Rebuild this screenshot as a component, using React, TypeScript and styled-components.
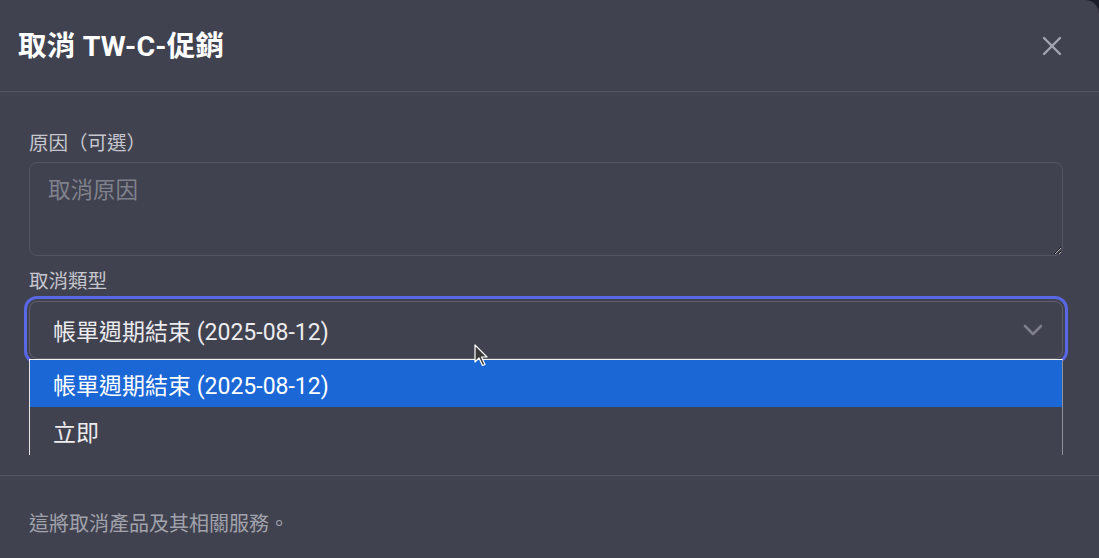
import React, {useState} from 'react';
import styled, {createGlobalStyle} from "styled-components";

const options = [
    '帳單週期結束 (2025-08-12)',
    '立即',
]

const App: React.FC = () => {
    const [selected, setSelected] = useState(0)

    return (
        <>
            <GlobalStyle/>
            <Modal>
                <Header>
                    <Title>取消 TW-C-促銷</Title>
                    <CloseButton aria-label="close">
                        <svg width="20" height="20" viewBox="0 0 20 20">
                            <path d="M2 2 L18 18 M18 2 L2 18" stroke="currentColor" strokeWidth="2.4"
                                  strokeLinecap="round"/>
                        </svg>
                    </CloseButton>
                </Header>
                <Body>
                    <Field>
                        <Label>原因（可選）</Label>
                        <TextArea placeholder="取消原因"/>
                    </Field>
                    <Field>
                        <Label>取消類型</Label>
                        <SelectWrap>
                            <SelectBox>
                                <span>{options[selected]}</span>
                                <svg width="20" height="12" viewBox="0 0 20 12">
                                    <path d="M2 2 L10 10 L18 2" fill="none" stroke="currentColor" strokeWidth="2.6"
                                          strokeLinecap="round" strokeLinejoin="round"/>
                                </svg>
                            </SelectBox>
                            <Dropdown>
                                {options.map((o, i) => (
                                    <Option key={o} $active={i === selected} onClick={() => setSelected(i)}>
                                        {o}
                                    </Option>
                                ))}
                            </Dropdown>
                        </SelectWrap>
                    </Field>
                </Body>
                <Footer>這將取消產品及其相關服務。</Footer>
                <Pointer width="16" height="24" viewBox="0 0 16 24">
                    <path d="M1 1 L1 18 L5 14 L8.5 21.5 L11 20.5 L7.5 13 L13 13 Z" fill="#3a3a3a" stroke="#ffffff"
                          strokeWidth="1.2" strokeLinejoin="round"/>
                </Pointer>
            </Modal>
        </>
    );
};

const GlobalStyle = createGlobalStyle`
  html, body {
    margin: 0;
    padding: 0;
    background: #1c1d2a;
    color-scheme: dark;
  }

  body {
    font-family: Roboto, "Noto Sans CJK TC", "Noto Sans", sans-serif;
  }
`

const Modal = styled.div`
  position: relative;
  width: 1099px;
  height: 558px;
  background-color: #41424f;
  border-top-right-radius: 14px;
  overflow: hidden;
  display: flex;
  flex-direction: column;
`

const Header = styled.div`
  height: 92px;
  flex: none;
  display: flex;
  align-items: center;
  justify-content: space-between;
  padding: 0 37px 0 18px;
  border-bottom: 1px solid #565765;
  box-sizing: border-box;
`

const Title = styled.h2`
  margin: 0 0 4px;
  font-size: 28.5px;
  font-weight: 700;
  color: #ffffff;
  letter-spacing: 0.2px;
`

const CloseButton = styled.button`
  background: none;
  border: none;
  padding: 0;
  color: #a3a6b1;
  display: flex;
  cursor: pointer;
`

const Body = styled.div`
  padding: 38px 36px 0 29px;
  height: 383px;
  box-sizing: border-box;
  display: flex;
  flex-direction: column;
  gap: 12px;
`

const Field = styled.div`
  display: flex;
  flex-direction: column;
  gap: 4px;
`

const Label = styled.label`
  font-size: 19.5px;
  line-height: 28px;
  color: #c6c7ce;
`

const TextArea = styled.textarea`
  height: 94px;
  box-sizing: border-box;
  background: transparent;
  border: 1px solid #545563;
  border-radius: 8px;
  padding: 9px 18px;
  font-family: inherit;
  font-size: 22.5px;
  color: #e6e6ea;
  resize: vertical;
  outline: none;

  &::placeholder {
    color: #7f818c;
  }
`

const SelectWrap = styled.div`
  position: relative;
  margin-top: 1px;
`

const SelectBox = styled.div`
  height: 58px;
  box-sizing: border-box;
  border: 1px solid #5e5f6b;
  border-radius: 8px;
  outline: 3px solid #5868e4;
  outline-offset: 2px;
  padding: 0 19px 0 23px;
  display: flex;
  align-items: center;
  justify-content: space-between;
  font-size: 23px;
  color: #ececef;

  svg {
    color: #7c7e89;
  }
`

const Dropdown = styled.div`
  position: absolute;
  top: 100%;
  left: 0;
  right: 0;
  height: 96px;
  background: #41424f;
  border-top: 1px solid #f2f2f2;
  border-left: 1px solid #e4e4e6;
  border-right: 1px solid #8e8f97;
  box-sizing: border-box;
  overflow: hidden;
  z-index: 2;
`

const Option = styled.div<{ $active: boolean }>`
  height: 47px;
  display: flex;
  align-items: center;
  padding-left: 23px;
  font-size: 23px;
  color: ${p => p.$active ? '#ffffff' : '#ececef'};
  background: ${p => p.$active ? '#1b67d6' : 'transparent'};
`

const Footer = styled.div`
  flex: 1;
  border-top: 1px solid #565765;
  padding: 34px 29px 0;
  font-size: 20px;
  line-height: 28px;
  color: #a1a3ac;
`

const Pointer = styled.svg`
  position: absolute;
  left: 474px;
  top: 344px;
  z-index: 5;
  pointer-events: none;
`

export default App;
